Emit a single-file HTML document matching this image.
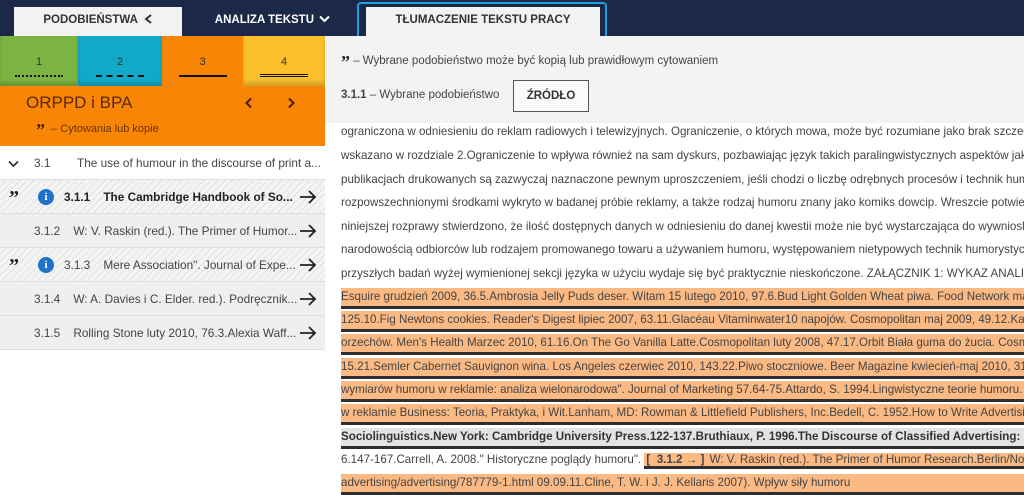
<!DOCTYPE html><html><head><meta charset="utf-8"><style>
*{margin:0;padding:0;box-sizing:border-box}
body{width:1024px;height:480px;overflow:hidden;background:#fff;font-family:"Liberation Sans",Arial,sans-serif;position:relative;color:#333}
.a{position:absolute}
.top{left:0;top:0;width:1024px;height:36px;background:#1b2847}
.tab{font-size:11.5px;font-weight:bold;text-align:center}
.ln{position:absolute;left:341px;width:683px;white-space:nowrap;overflow:hidden;font-size:11.6px;line-height:18px;height:18px;color:#444}
.hl{background:#fbb984;border-bottom:3px solid #2f2f2f;height:21px}
.gr{background:#e3e3e3;border-bottom:3px solid #2f2f2f;height:21px;font-weight:bold;color:#333}
.row{position:absolute;left:0;width:325px;height:34px;border-bottom:1px solid #ddd;font-size:11.8px;color:#444;line-height:34px;white-space:nowrap}
.str{background:repeating-linear-gradient(135deg,#f4f4f4 0 4px,#e2e2e2 4px 5px)}
.pl{background:#efefef}
.ar{position:absolute;right:8px;top:9px}
.info{position:absolute;left:38px;top:9px;width:16px;height:16px;border-radius:50%;background:#1e73c8;color:#fff;font-size:11px;font-weight:bold;text-align:center;line-height:16px;font-family:"Liberation Serif",serif}
.q{position:absolute;left:9px;top:1px;font-size:20px;font-weight:bold;color:#222;font-family:"Liberation Serif",serif;line-height:34px}
</style></head><body>
<svg width="0" height="0" style="position:absolute"><defs><symbol id="arr" viewBox="0 0 18 16"><path d="M1 8H16M10 2L16 8L10 14" fill="none" stroke="#222" stroke-width="1.8"/></symbol></defs></svg>
<div class="a top"></div>
<div class="a tab" style="left:14px;top:7px;width:168px;height:29px;background:#f2f2f2;line-height:26px;color:#333">PODOBIEŃSTWA <svg width="9" height="10" viewBox="0 0 9 10" style="vertical-align:-1px;margin-left:3px"><path d="M7 1L2 5L7 9" fill="none" stroke="#333" stroke-width="2"/></svg></div>
<div class="a tab" style="left:200px;top:7px;width:145px;height:26px;line-height:26px;color:#fff">ANALIZA TEKSTU <svg width="11" height="8" viewBox="0 0 11 8" style="vertical-align:0;margin-left:2px"><path d="M1 1.5L5.5 6L10 1.5" fill="none" stroke="#fff" stroke-width="2"/></svg></div>
<div class="a" style="left:357px;top:2px;width:250px;height:47px;border:2px solid #1fa0e0;border-radius:4px"></div>
<div class="a tab" style="left:366px;top:7px;width:234px;height:38px;background:#f2f2f2;line-height:26px;color:#333">TŁUMACZENIE TEKSTU PRACY</div>
<div class="a" style="left:0;top:36px;width:78px;height:50px;background:#7cb342;box-shadow:inset 0 -4px 3px rgba(0,0,0,.15)"><div style="text-align:center;font-size:11px;margin-top:20px;color:#333">1</div><div style="margin:7px auto 0;width:48px;border-top:2px dotted #111"></div></div>
<div class="a" style="left:78px;top:36px;width:84px;height:50px;background:#12a9c9;box-shadow:inset 0 -4px 3px rgba(0,0,0,.15)"><div style="text-align:center;font-size:11px;margin-top:20px;color:#333">2</div><div style="margin:7px auto 0;width:48px;border-top:2px dashed #111"></div></div>
<div class="a" style="left:162px;top:36px;width:81px;height:50px;background:#f88505"><div style="text-align:center;font-size:11px;margin-top:20px;color:#333">3</div><div style="margin:7px auto 0;width:48px;border-top:2px solid #111"></div></div>
<div class="a" style="left:243px;top:36px;width:82px;height:50px;background:#fbbf2d;box-shadow:inset 0 -4px 3px rgba(0,0,0,.15)"><div style="text-align:center;font-size:11px;margin-top:20px;color:#333">4</div><div style="margin:6px auto 0;width:48px;border-top:3px double #111"></div></div>
<div class="a" style="left:0;top:86px;width:325px;height:60px;background:#f88505"></div>
<div class="a" style="left:26px;top:93px;font-size:17px;color:#5a2a00">ORPPD i BPA</div>
<svg class="a" style="left:244px;top:97px" width="10" height="12" viewBox="0 0 10 12"><path d="M7 1.5L2.5 6L7 10.5" fill="none" stroke="#4a1a00" stroke-width="2"/></svg>
<svg class="a" style="left:286px;top:97px" width="10" height="12" viewBox="0 0 10 12"><path d="M3 1.5L7.5 6L3 10.5" fill="none" stroke="#4a1a00" stroke-width="2"/></svg>
<div class="a" style="left:36px;top:120px;font-size:11px;color:#6a3300"><b style="font-size:18px;color:#4a1a00;font-family:'Liberation Serif',serif;vertical-align:-4px">”</b> &nbsp;– Cytowania lub kopie</div>
<div class="row" style="top:148px;height:32px;line-height:30px;background:#fff"><svg style="position:absolute;left:8px;top:12px" width="11" height="8" viewBox="0 0 11 8"><path d="M1 1.5L5.5 6L10 1.5" fill="none" stroke="#333" stroke-width="1.8"/></svg><span style="position:absolute;left:34px">3.1</span><span style="position:absolute;left:77px">The use of humour in the discourse of print a...</span></div>
<div class="row str" style="top:180px"><span class="q">”</span><span class="info">i</span><span style="position:absolute;left:64px;font-weight:bold;color:#222">3.1.1 &nbsp;&nbsp;&nbsp;The Cambridge Handbook of So...</span><svg class="ar" width="18" height="16"><use href="#arr"/></svg></div>
<div class="row pl" style="top:214px"><span style="position:absolute;left:34px">3.1.2 &nbsp;&nbsp;&nbsp;W: V. Raskin (red.). The Primer of Humor...</span><svg class="ar" width="18" height="16"><use href="#arr"/></svg></div>
<div class="row str" style="top:248px"><span class="q">”</span><span class="info">i</span><span style="position:absolute;left:64px">3.1.3 &nbsp;&nbsp;&nbsp;Mere Association". Journal of Expe...</span><svg class="ar" width="18" height="16"><use href="#arr"/></svg></div>
<div class="row pl" style="top:282px"><span style="position:absolute;left:34px">3.1.4 &nbsp;&nbsp;&nbsp;W: A. Davies i C. Elder. red.). Podręcznik...</span><svg class="ar" width="18" height="16"><use href="#arr"/></svg></div>
<div class="row pl" style="top:316px"><span style="position:absolute;left:34px">3.1.5 &nbsp;&nbsp;&nbsp;Rolling Stone luty 2010, 76.3.Alexia Waff...</span><svg class="ar" width="18" height="16"><use href="#arr"/></svg></div>
<div class="a" style="left:325px;top:36px;width:699px;height:87px;background:#f3f3f3"></div>
<div class="a" style="left:341px;top:52px;font-size:11.5px;color:#444"><b style="font-size:18px;color:#222;font-family:'Liberation Serif',serif;vertical-align:-4px">”</b> – Wybrane podobieństwo może być kopią lub prawidłowym cytowaniem</div>
<div class="a" style="left:341px;top:89px;font-size:11.5px;color:#444"><b>3.1.1</b> – Wybrane podobieństwo</div>
<div class="a" style="left:513px;top:80px;width:76px;height:32px;border:1px solid #555;background:#fafafa;font-size:11.5px;font-weight:bold;text-align:center;line-height:30px;color:#333">ŹRÓDŁO</div>
<div class="ln" style="top:123px">ograniczona w odniesieniu do reklam radiowych i telewizyjnych. Ograniczenie, o których mowa, może być rozumiane jako brak szczegółowych</div>
<div class="ln" style="top:147px">wskazano w rozdziale 2.Ograniczenie to wpływa również na sam dyskurs, pozbawiając język takich paralingwistycznych aspektów jak</div>
<div class="ln" style="top:171px">publikacjach drukowanych są zazwyczaj naznaczone pewnym uproszczeniem, jeśli chodzi o liczbę odrębnych procesów i technik humoru</div>
<div class="ln" style="top:194px">rozpowszechnionymi środkami wykryto w badanej próbie reklamy, a także rodzaj humoru znany jako komiks dowcip. Wreszcie potwierdzono</div>
<div class="ln" style="top:218px">niniejszej rozprawy stwierdzono, że ilość dostępnych danych w odniesieniu do danej kwestii może nie być wystarczająca do wywnioskowania</div>
<div class="ln" style="top:241px">narodowością odbiorców lub rodzajem promowanego towaru a używaniem humoru, występowaniem nietypowych technik humorystycznych</div>
<div class="ln" style="top:265px">przyszłych badań wyżej wymienionej sekcji języka w użyciu wydaje się być praktycznie nieskończone. ZAŁĄCZNIK 1: WYKAZ ANALIZOWANYCH</div>
<div class="ln hl" style="top:288px">Esquire grudzień 2009, 36.5.Ambrosia Jelly Puds deser. Witam 15 lutego 2010, 97.6.Bud Light Golden Wheat piwa. Food Network magazine</div>
<div class="ln hl" style="top:311px">125.10.Fig Newtons cookies. Reader's Digest lipiec 2007, 63.11.Glacéau Vitaminwater10 napojów. Cosmopolitan maj 2009, 49.12.Kashi</div>
<div class="ln hl" style="top:334px">orzechów. Men's Health Marzec 2010, 61.16.On The Go Vanilla Latte.Cosmopolitan luty 2008, 47.17.Orbit Biała guma do żucia. Cosmopolitan</div>
<div class="ln hl" style="top:358px">15.21.Semler Cabernet Sauvignon wina. Los Angeles czerwiec 2010, 143.22.Piwo stoczniowe. Beer Magazine kwiecień-maj 2010, 31.23</div>
<div class="ln hl" style="top:381px">wymiarów humoru w reklamie: analiza wielonarodowa". Journal of Marketing 57.64-75.Attardo, S. 1994.Lingwistyczne teorie humoru.</div>
<div class="ln hl" style="top:404px">w reklamie Business: Teoria, Praktyka, i Wit.Lanham, MD: Rowman &amp; Littlefield Publishers, Inc.Bedell, C. 1952.How to Write Advertising</div>
<div class="ln gr" style="top:428px">Sociolinguistics.New York: Cambridge University Press.122-137.Bruthiaux, P. 1996.The Discourse of Classified Advertising: Exploring</div>
<div class="ln" style="top:451px;height:21px">6.147-167.Carrell, A. 2008." Historyczne poglądy humoru". <span style="background:#fbb984;border-bottom:3px solid #2f2f2f;font-weight:bold;padding:0 2px">[ &nbsp;3.1.2 → ]</span><span style="background:#fbb984;border-bottom:3px solid #2f2f2f"> W: V. Raskin (red.). The Primer of Humor Research.Berlin/Nowy Jork</span></div>
<div class="ln hl" style="top:474px">advertising/advertising/787779-1.html 09.09.11.Cline, T. W. i J. J. Kellaris 2007). Wpływ siły humoru</div>
</body></html>
